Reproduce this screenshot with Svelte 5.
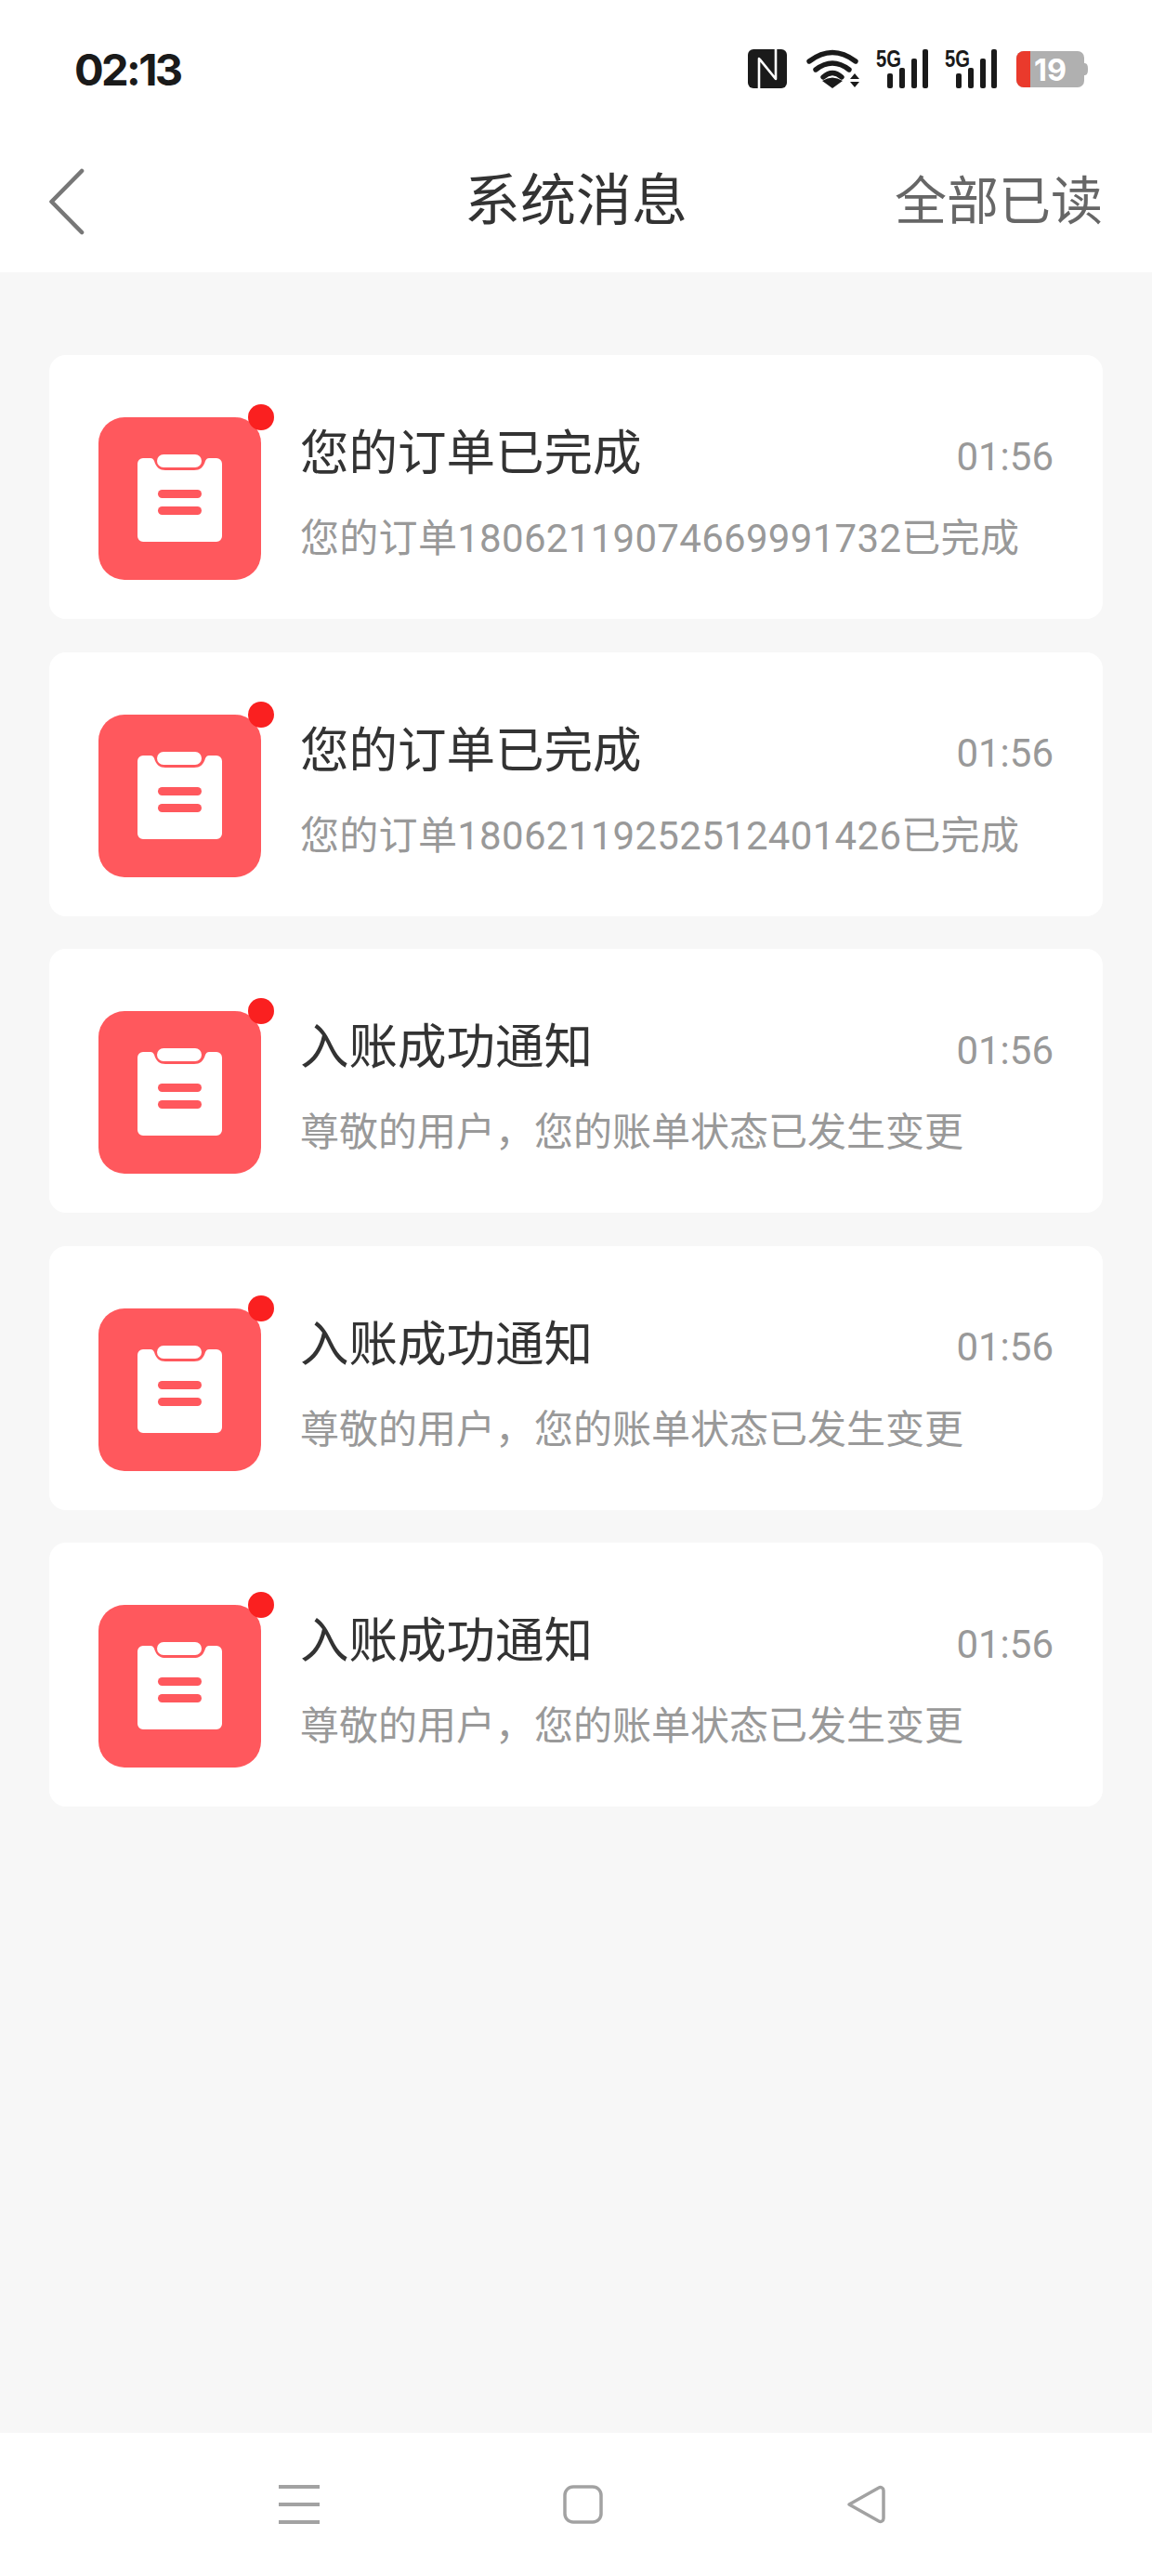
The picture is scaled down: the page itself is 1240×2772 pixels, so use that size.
<script>
    const messages = [
        { title: '您的订单已完成', desc: '您的订单18062119074669991732已完成', time: '01:56', order: true },
        { title: '您的订单已完成', desc: '您的订单18062119252512401426已完成', time: '01:56', order: true },
        { title: '入账成功通知', desc: '尊敬的用户，您的账单状态已发生变更', time: '01:56' },
        { title: '入账成功通知', desc: '尊敬的用户，您的账单状态已发生变更', time: '01:56' },
        { title: '入账成功通知', desc: '尊敬的用户，您的账单状态已发生变更', time: '01:56' }
    ];
</script>

{#snippet signal()}
    <svg class="signal" width="57" height="48" viewBox="0 -5 57 48">
        <text x="0" y="19" class="five-g" textLength="27" lengthAdjust="spacingAndGlyphs">5G</text>
        <rect x="12" y="26" width="6" height="16" rx="2" />
        <rect x="25" y="20" width="6" height="22" rx="2" />
        <rect x="38" y="10" width="6" height="32" rx="2" />
        <rect x="50" y="0" width="6" height="42" rx="2" />
    </svg>
{/snippet}

<div class="page">
    <header class="header">
        <div class="status-bar">
            <span class="clock">02:13</span>
            <div class="status-icons">
                <svg class="nfc" width="42" height="42" viewBox="0 0 42 42">
                    <rect width="42" height="42" rx="6" fill="#1a1a1a" />
                    <path d="M12 42V10l18 22M30 0V32L13 11" fill="none" stroke="#fff" stroke-width="2.600" stroke-linejoin="round" />
                </svg>
                <svg class="wifi" width="58" height="42" viewBox="0 0 58 42">
                    <g fill="none" stroke="#1a1a1a" stroke-width="5.400" stroke-linecap="round">
                        <path d="M3 13Q28 -6 53 13" />
                        <path d="M10 22Q28 8 46 22" />
                        <path d="M18 30Q28 21 38 30" />
                    </g>
                    <path d="M28 42L17 34Q28 27 39 34Z" fill="#1a1a1a" />
                    <path d="M47 32l5-6 5 6zM47 35h10l-5 6z" fill="#1a1a1a" />
                </svg>
                {@render signal()}
                {@render signal()}
                <svg class="battery" width="77" height="40" viewBox="0 0 77 40">
                    <path d="M8 0h58a7 7 0 0 1 7 7v25a7 7 0 0 1-7 7H8a8 8 0 0 1-8-8V8a8 8 0 0 1 8-8z" fill="#b0b0b0" />
                    <path d="M8 0h7v39H8a8 8 0 0 1-8-8V8a8 8 0 0 1 8-8z" fill="#ea3a2c" />
                    <path d="M73 13c3 0 4 2 4 6.500s-1 6.500-4 6.500z" fill="#b0b0b0" />
                    <text x="19" y="32" class="battery-text" textLength="35" lengthAdjust="spacingAndGlyphs">19</text>
                </svg>
            </div>
        </div>
        <nav class="nav">
            <svg class="back" width="40" height="72" viewBox="0 0 40 72">
                <path d="M35 3L2.500 36 35 69" fill="none" stroke="#777" stroke-width="4.600" stroke-linecap="round" stroke-linejoin="round" />
            </svg>
            <h1>系统消息</h1>
            <span class="read-all">全部已读</span>
        </nav>
    </header>

    <main class="list">
        {#each messages as msg}
            <div class="card">
                <div class="icon">
                    <svg width="175" height="175" viewBox="0 0 175 175">
                        <rect width="175" height="175" rx="28" fill="#ff585d" />
                        <path d="M48 44h8c2 0 3 1 4 3 2 7 6 10 12 10h31c6 0 10-3 12-10 1-2 2-3 4-3h8a6 6 0 0 1 6 6v78a6 6 0 0 1-6 6H48a6 6 0 0 1-6-6V50a6 6 0 0 1 6-6z" fill="#fff" />
                        <rect x="63" y="40" width="48" height="14" rx="7" fill="#fff" />
                        <rect x="64" y="78" width="47" height="9" rx="4.500" fill="#ff585d" />
                        <rect x="64" y="96" width="47" height="9" rx="4.500" fill="#ff585d" />
                    </svg>
                    <span class="dot"></span>
                </div>
                <div class="body">
                    <div class="top">
                        <span class="title">{msg.title}</span>
                        <span class="time">{msg.time}</span>
                    </div>
                    <p class="desc" class:order={msg.order}>{msg.desc}</p>
                </div>
            </div>
        {/each}
    </main>

    <footer class="bottom-nav">
        <svg width="44" height="42" viewBox="0 0 44 42">
            <path d="M0 2h44M0 21h44M0 40h44" stroke="#a2a2a2" stroke-width="4" fill="none" />
        </svg>
        <svg width="44" height="42" viewBox="0 0 44 42">
            <rect x="2" y="2" width="39" height="38" rx="9" fill="none" stroke="#a2a2a2" stroke-width="3.500" />
        </svg>
        <svg width="44" height="42" viewBox="0 0 44 42">
            <path d="M3 21L35 3c2-1 5 0 5 3v30c0 3-3 4-5 3z" fill="none" stroke="#a2a2a2" stroke-width="3.500" stroke-linejoin="round" />
        </svg>
    </footer>
</div>

<style>
    :global(body) {
        margin: 0;
        background: #f7f7f7;
    }

    .page {
        width: 1240px;
        height: 2772px;
        display: flex;
        flex-direction: column;
        background: #f7f7f7;
        font-family: Roboto, "Noto Sans CJK SC", sans-serif;
    }

    .header {
        height: 293px;
        background: #fff;
        flex-shrink: 0;
    }

    .status-bar {
        height: 146px;
        box-sizing: border-box;
        padding: 53px 69px 0 80px;
        display: flex;
        justify-content: space-between;
        align-items: flex-start;
    }

    .clock {
        font-family: Inter, sans-serif;
        font-size: 47px;
        font-weight: 700;
        letter-spacing: -2.600px;
        line-height: 44px;
        color: #1a1a1a;
    }

    .status-icons {
        display: flex;
        gap: 17px;
        align-items: flex-start;
    }

    .nfc {
        margin-right: 4px;
    }

    .signal {
        fill: #1a1a1a;
        margin-top: -5px;
    }

    .five-g {
        font-family: "Liberation Sans", sans-serif;
        font-size: 26px;
        font-weight: 700;
    }

    .battery {
        margin-top: 2px;
        margin-left: 3px;
    }

    .battery-text {
        font-family: Inter, sans-serif;
        font-size: 33px;
        font-weight: 700;
        fill: #fff;
    }

    .nav {
        height: 147px;
        box-sizing: border-box;
        padding: 0 53px 6px;
        display: grid;
        grid-template-columns: 1fr auto 1fr;
        align-items: center;
    }

    h1 {
        margin: 0;
        font-size: 60px;
        font-weight: 400;
        color: #333;
        line-height: 1;
    }

    .read-all {
        justify-self: end;
        font-size: 56px;
        color: #666;
        line-height: 1;
    }

    .list {
        flex: 1;
        padding: 89px 53px 0;
        display: flex;
        flex-direction: column;
        gap: 35.500px;
    }

    .card {
        height: 284px;
        box-sizing: border-box;
        padding: 67px 53px 0;
        display: flex;
        gap: 42px;
        background: #fff;
        border-radius: 18px;
    }

    .icon {
        position: relative;
        width: 175px;
        height: 175px;
        flex-shrink: 0;
    }

    .icon svg {
        display: block;
    }

    .dot {
        position: absolute;
        top: -14px;
        right: -14px;
        width: 28px;
        height: 28px;
        border-radius: 50%;
        background: #fa2020;
    }

    .body {
        flex: 1;
        min-width: 0;
    }

    .top {
        display: flex;
        justify-content: space-between;
        align-items: center;
        height: 60px;
        margin-top: 9px;
    }

    .title {
        font-size: 52.500px;
        line-height: 60px;
        color: #333;
    }

    .time {
        font-size: 42px;
        color: #999;
        margin-top: 6px;
    }

    .desc {
        margin: 37px 0 0;
        font-size: 42px;
        line-height: 50px;
        color: #999;
        white-space: nowrap;
    }

    .desc.order {
        letter-spacing: 0.300px;
    }

    .bottom-nav {
        height: 154px;
        flex-shrink: 0;
        box-sizing: border-box;
        background: #fff;
        padding: 56px 285px 0 300px;
        display: flex;
        justify-content: space-between;
        align-items: flex-start;
    }
</style>
